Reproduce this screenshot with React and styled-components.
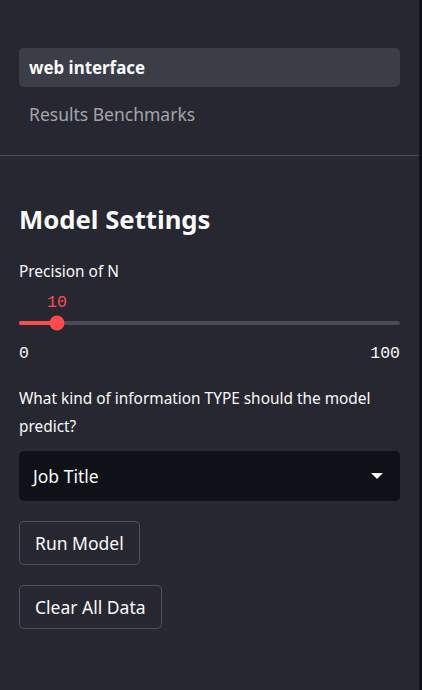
import React from "react";
import styled, { createGlobalStyle } from "styled-components";

const GlobalStyle = createGlobalStyle`
  body {
    margin: 0;
    background: #0e1117;
    font-family: "Noto Sans", "Open Sans", sans-serif;
  }
`;

const Page = styled.div`
  display: flex;
  height: 690px;
  background: #0e1117;
`;

const Sidebar = styled.aside`
  width: 419px;
  background: #262730;
  color: #fafafa;
  display: flex;
  flex-direction: column;
`;

const Nav = styled.nav`
  padding: 48px 19px 22px 19px;
  display: flex;
  flex-direction: column;
  gap: 7px;
`;

const NavItem = styled.div`
  height: 39px;
  display: flex;
  align-items: center;
  padding: 0 10px;
  border-radius: 5px;
  font-size: ${(p) => (p.active ? 16.9 : 17.5)}px;
  background: ${(p) => (p.active ? "#3b3d47" : "transparent")};
  color: ${(p) => (p.active ? "#fafafa" : "rgba(250,250,250,0.6)")};
  font-weight: ${(p) => (p.active ? 700 : 400)};
`;

const Divider = styled.hr`
  margin: 0;
  border: none;
  border-top: 1px solid rgba(250, 250, 250, 0.2);
`;

const Content = styled.section`
  padding: 46px 19px 0 19px;
  display: flex;
  flex-direction: column;
`;

const Heading = styled.h2`
  margin: 0 0 20px 0;
  font-size: 25.7px;
  font-weight: 700;
  line-height: 36px;
`;

const Label = styled.div`
  font-size: 15.4px;
  line-height: 28px;
`;

const SliderWrap = styled.div`
  display: flex;
  flex-direction: column;
  margin-top: 7px;
`;

const ValueRow = styled.div`
  height: 20px;
  position: relative;
`;

const Mono = styled.span`
  font-family: "Liberation Mono", "DejaVu Sans Mono", monospace;
  font-size: 16.5px;
  line-height: 20px;
`;

const Value = styled(Mono)`
  position: absolute;
  left: ${(p) => p.x}px;
  transform: translateX(-50%);
  color: #ff4b4b;
`;

const Track = styled.div`
  position: relative;
  height: 4px;
  border-radius: 2px;
  margin: 8px 0 19px 0;
  background: #4a4b55;
`;

const Fill = styled.div`
  height: 100%;
  border-radius: 2px;
  background: #ff4b4b;
`;

const Thumb = styled.div`
  position: absolute;
  top: 50%;
  width: 15px;
  height: 15px;
  border-radius: 50%;
  background: #ff4b4b;
  transform: translate(-50%, -50%);
`;

const TickRow = styled.div`
  display: flex;
  justify-content: space-between;
  height: 20px;
`;

const Question = styled(Label)`
  margin-top: 21px;
`;

const Select = styled.div`
  margin-top: 10px;
  height: 50px;
  border-radius: 5px;
  background: #0e1117;
  display: flex;
  align-items: center;
  justify-content: space-between;
  padding: 0 17px 0 14px;
  font-size: 17.5px;
`;

const Caret = styled.span`
  width: 0;
  height: 0;
  border-left: 6px solid transparent;
  border-right: 6px solid transparent;
  border-top: 6px solid #fafafa;
`;

const Button = styled.button`
  align-self: flex-start;
  margin-top: ${(p) => p.gap}px;
  height: 44px;
  padding: 0 15px;
  background: #262730;
  color: #fafafa;
  border: 1px solid rgba(250, 250, 250, 0.2);
  border-radius: 5px;
  font-family: inherit;
  font-size: 17.5px;
`;

const Strip = styled.div`
  flex: 1;
  background: #0e1117;
`;

export default function App() {
  const value = 10;
  const pos = 38;
  return (
    <>
      <GlobalStyle />
      <Page>
        <Sidebar>
          <Nav>
            <NavItem active>web interface</NavItem>
            <NavItem>Results Benchmarks</NavItem>
          </Nav>
          <Divider />
          <Content>
            <Heading>Model Settings</Heading>
            <Label>Precision of N</Label>
            <SliderWrap>
              <ValueRow>
                <Value x={pos}>{value}</Value>
              </ValueRow>
              <Track>
                <Fill style={{ width: pos }} />
                <Thumb style={{ left: pos }} />
              </Track>
              <TickRow>
                <Mono>0</Mono>
                <Mono>100</Mono>
              </TickRow>
            </SliderWrap>
            <Question>What kind of information TYPE should the model predict?</Question>
            <Select>
              <span>Job Title</span>
              <Caret />
            </Select>
            <Button gap={20}>Run Model</Button>
            <Button gap={20}>Clear All Data</Button>
          </Content>
        </Sidebar>
        <Strip />
      </Page>
    </>
  );
}
